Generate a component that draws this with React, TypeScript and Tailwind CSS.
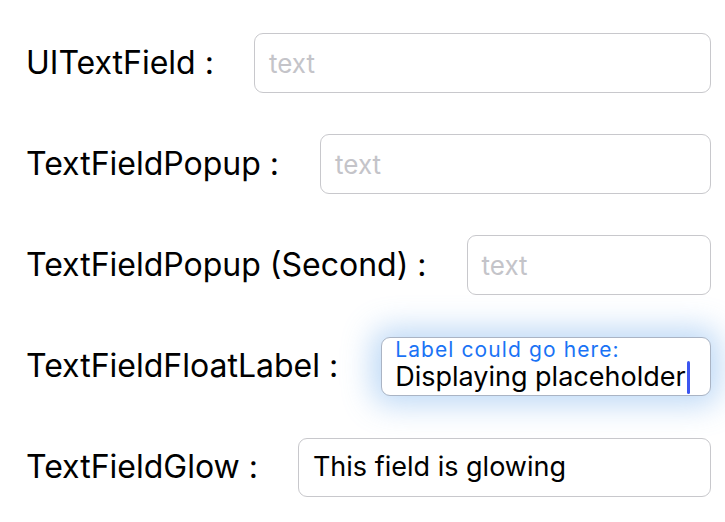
export default function App() {
  const font = { fontFamily: "Inter, 'Noto Sans', sans-serif" };
  const rows = [
    { label: "UITextField :", placeholder: "text", gap: "mr-[40px]" },
    { label: "TextFieldPopup :", placeholder: "text", gap: "mr-[41px]" },
    { label: "TextFieldPopup (Second) :", placeholder: "text", gap: "mr-[40px]" },
  ];

  return (
    <div className="w-[725px] h-[522px] bg-white overflow-hidden" style={font}>
      <div className="flex flex-col gap-[41px] pt-[33px] pl-[26px] pr-[14px]">
        {rows.map(r => (
          <div key={r.label} className="flex items-center h-[60px]">
            <span className={`text-[32px] text-black whitespace-nowrap ${r.gap}`}>{r.label}</span>
            <div className="flex-1 h-[60px] rounded-[9px] border border-[#c8c8cc] flex items-center px-[14px]">
              <span className="text-[26px] text-[#c4c4c9]">{r.placeholder}</span>
            </div>
          </div>
        ))}

        {/* float label */}
        <div className="flex items-center h-[60px]">
          <span className="text-[32px] text-black whitespace-nowrap mr-[43px]">TextFieldFloatLabel :</span>
          <div className="flex-1 h-[59px] rounded-[9px] border border-[#aab4c4] bg-white shadow-[0_0_30px_9px_rgba(110,170,235,0.45)] flex flex-col justify-center px-[13px]">
            <span className="text-[21px] leading-[22px] tracking-[1.1px] text-[#1a73f5]">Label could go here:</span>
            <div className="flex items-center">
              <span className="text-[27px] leading-[30px] text-black">Displaying placeholder</span>
              <span className="w-[3px] h-[33px] bg-[#3b55f0] rounded-sm ml-px"></span>
            </div>
          </div>
        </div>

        {/* glow */}
        <div className="flex items-center h-[60px]">
          <span className="text-[32px] text-black whitespace-nowrap mr-[40px]">TextFieldGlow :</span>
          <div className="flex-1 h-[59px] rounded-[9px] border border-[#c8c8cc] flex items-center px-[14px]">
            <span className="text-[27px] text-black">This field is glowing</span>
          </div>
        </div>
      </div>
    </div>
  );
}
